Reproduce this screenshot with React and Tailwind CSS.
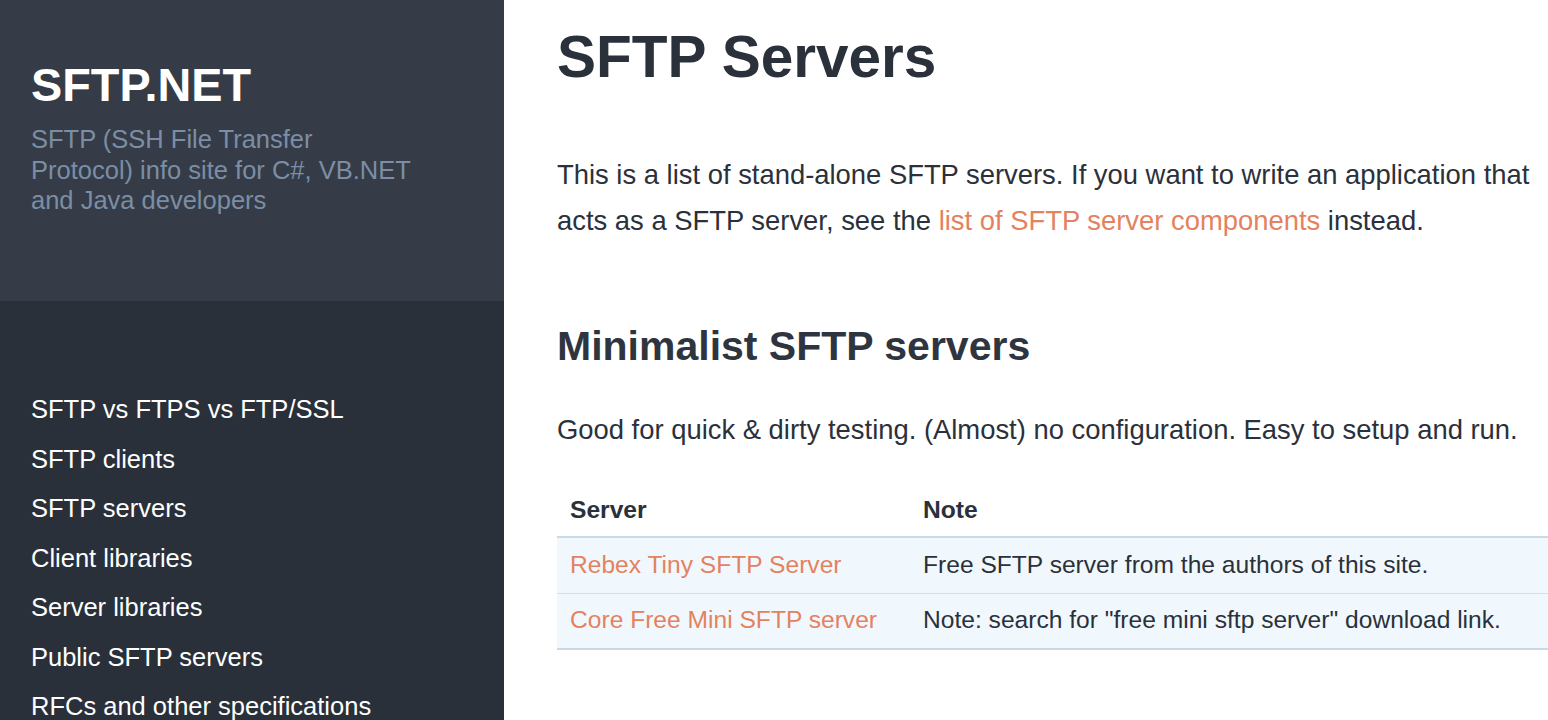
import React from 'react';

const navItems = [
    'SFTP vs FTPS vs FTP/SSL',
    'SFTP clients',
    'SFTP servers',
    'Client libraries',
    'Server libraries',
    'Public SFTP servers',
    'RFCs and other specifications',
];

const servers = [
    { name: 'Rebex Tiny SFTP Server', note: 'Free SFTP server from the authors of this site.' },
    { name: 'Core Free Mini SFTP server', note: 'Note: search for "free mini sftp server" download link.' },
];

const App = () => {
    return (
        <div className="flex h-[720px] overflow-hidden bg-white font-['Liberation_Sans',Arial,sans-serif]">
            {/* sidebar */}
            <aside className="w-[504px] shrink-0 flex flex-col bg-[#29303a]">
                <div className="h-[301px] shrink-0 bg-[#353c47] px-[31px] pt-[58px]">
                    <h1 className="text-[46.8px] font-bold text-white leading-[54px]">SFTP.NET</h1>
                    <p className="mt-[12px] text-[25.5px] leading-[30.5px] text-[#7b8ea5] whitespace-nowrap">
                        SFTP (SSH File Transfer<br />
                        Protocol) info site for C#, VB.NET<br />
                        and Java developers
                    </p>
                </div>
                <nav className="px-[31px] pt-[92px]">
                    <ul className="flex flex-col">
                        {navItems.map((item) => (
                            <li key={item} className="h-[49.5px] shrink-0 text-[25.5px] leading-[32px] text-white whitespace-nowrap">
                                {item}
                            </li>
                        ))}
                    </ul>
                </nav>
            </aside>

            {/* main content */}
            <main className="flex-1 pl-[53px] pt-[22px] text-[#2a313b]">
                <h1 className="text-[58.5px] font-bold leading-[70px]">SFTP Servers</h1>
                <p className="mt-[60px] text-[27.4px] leading-[46px] w-[985px]">
                    This is a list of stand-alone SFTP servers. If you want to write an application that acts as a SFTP server, see the{' '}
                    <a className="text-[#e4825f]">list of SFTP server components</a> instead.
                </p>
                <h2 className="mt-[78px] text-[41px] font-bold leading-[48px] text-[#2f353f]">Minimalist SFTP servers</h2>
                <p className="mt-[37px] text-[27.4px] leading-[46px]">
                    Good for quick &amp; dirty testing. (Almost) no configuration. Easy to setup and run.
                </p>
                <table className="mt-[30px] w-[1000px] border-collapse text-[24.6px]">
                    <thead>
                        <tr className="h-[54px] border-b-2 border-[#cadbe7]">
                            <th className="w-[353px] text-left font-bold px-[13px] pt-[2px]">Server</th>
                            <th className="text-left font-bold px-[13px] pt-[2px]">Note</th>
                        </tr>
                    </thead>
                    <tbody>
                        {servers.map((s, i) => (
                            <tr
                                key={s.name}
                                className={`h-[56px] bg-[#f1f8fd] ${i === servers.length - 1 ? 'border-b-2 border-[#cdd9e2]' : 'border-b border-[#d3e1eb]'}`}
                            >
                                <td className="px-[13px] text-[#e4825f]">{s.name}</td>
                                <td className="px-[13px]">{s.note}</td>
                            </tr>
                        ))}
                    </tbody>
                </table>
            </main>
        </div>
    );
};

export default App;
